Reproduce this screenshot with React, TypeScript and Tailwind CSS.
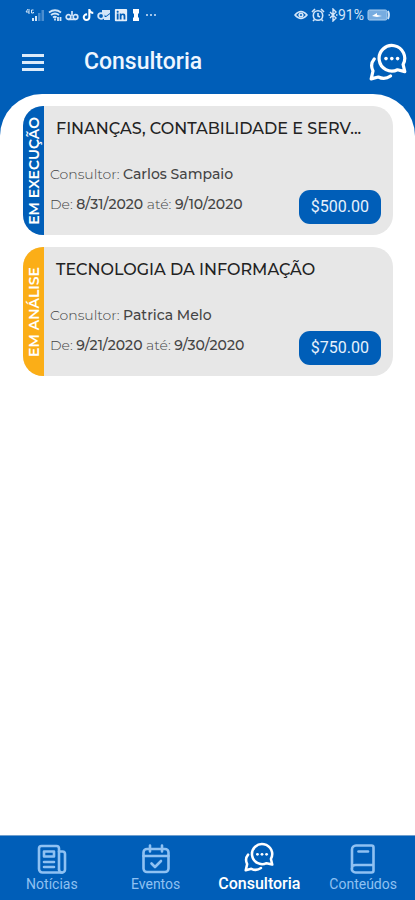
import { FaLinkedin, FaTiktok } from 'react-icons/fa';

const consultorias = [
  {
    status: 'EM EXECUÇÃO',
    color: 'bg-[#005eb8]',
    title: 'FINANÇAS, CONTABILIDADE E SERV...',
    consultor: 'Carlos Sampaio',
    start: '8/31/2020',
    end: '9/10/2020',
    price: '$500.00',
  },
  {
    status: 'EM ANÁLISE',
    color: 'bg-[#fbae17]',
    title: 'TECNOLOGIA DA INFORMAÇÃO',
    consultor: 'Patrica Melo',
    start: '9/21/2020',
    end: '9/30/2020',
    price: '$750.00',
  },
];

function ChatIcon({ className }: { className: string }) {
  return (
    <svg viewBox="0 0 38 38" fill="none" stroke="currentColor" strokeWidth="3.2" strokeLinecap="round" strokeLinejoin="round" className={className}>
      <path d="M34.1 21.500A12.800 12.800 0 1 0 28.500 26.800L35.800 28.600Z" />
      <path d="M5.2 16C2.200 19.600 2 24 4 28L2.200 35.900L9.3 34C13.500 36 18 35.500 21.500 33" />
      <g fill="currentColor" stroke="none">
        <circle cx="17" cy="15.6" r="1.8" />
        <circle cx="22.8" cy="15.6" r="1.8" />
        <circle cx="28.6" cy="15.6" r="1.8" />
      </g>
    </svg>
  );
}

function NewsIcon() {
  return (
    <svg viewBox="0 0 30 30" fill="none" stroke="currentColor" strokeWidth="2.6" strokeLinecap="round" strokeLinejoin="round" className="size-[30px]">
      <path d="M22 25V4.500a2.500 2.500 0 0 0-2.500-2.500H4.500A2.500 2.500 0 0 0 2 4.500V25a3.500 3.500 0 0 0 3.500 3.500H25" />
      <path d="M22 7.500h3.500a2.500 2.500 0 0 1 2.500 2.500V25.500a3 3 0 0 1-6 0" />
      <path d="M7 7.500h10v5H7zM7 18h10M7 23h10" />
    </svg>
  );
}

function EventIcon() {
  return (
    <svg viewBox="0 0 30 30" fill="none" stroke="currentColor" strokeWidth="2.6" strokeLinecap="round" strokeLinejoin="round" className="size-[30px]">
      <rect x="2.500" y="5" width="25" height="23" rx="3.500" />
      <path d="M2.500 12h25M9 1.500v6M21 1.500v6M10.500 19.500l3.500 3.500 6-6" />
    </svg>
  );
}

function BookIcon() {
  return (
    <svg viewBox="0 0 30 30" fill="none" stroke="currentColor" strokeWidth="2.6" strokeLinecap="round" strokeLinejoin="round" className="size-[30px]">
      <path d="M4 25V5.500A4 4 0 0 1 8 1.500h15.500a2 2 0 0 1 2 2V21H7.500a3.500 3.500 0 0 0 0 7.500h16a2 2 0 0 0 2-2V21" />
      <path d="M10.500 7.500h9.500" />
    </svg>
  );
}

function StatusBar() {
  return (
    <div className="flex h-[30px] items-center justify-between pr-6 pl-[25px] text-[#d3e6f9]">
      <div className="flex items-center gap-[3px]">
        <svg viewBox="0 0 20 14" className="h-[14px] w-[20px]" fill="currentColor">
          <path d="M3 1L1 4h3M4 1v5M8.500 2H6.500v3h2V4" fill="none" stroke="currentColor" strokeWidth="1" />
          <path d="M7 10h2v3H7zM10 8h2v5h-2z" />
          <path d="M13 5h2.500v8H13zM16.500 2h2.500v11h-2.500z" opacity="0.35" />
        </svg>
        <svg viewBox="0 0 14 14" className="size-[14px]" fill="none" stroke="currentColor" strokeWidth="1.800">
          <path d="M1 4.500Q7 0 13 4.500M3 7Q7 4 11 7M5 9.500Q7 8 8.500 9.500M7 12.500v-2M10 9v4M12.500 9v4" />
        </svg>
        <svg viewBox="0 0 14 14" className="size-[14px]" fill="none" stroke="currentColor" strokeWidth="1.700">
          <circle cx="3.500" cy="9" r="2.300" />
          <circle cx="10.500" cy="9" r="2.300" />
          <path d="M3.500 11.300h7M7 3v5" />
        </svg>
        <FaTiktok size={12} className="text-white" />
        <svg viewBox="0 0 14 14" className="size-[14px]" fill="currentColor">
          <path d="M5 2h8v3L9 8 5 5zM9 9l4-3v6H7V9z" />
          <circle cx="4" cy="8" r="2.800" fill="#005eb8" stroke="currentColor" strokeWidth="1.800" />
        </svg>
        <FaLinkedin size={14} className="text-[#e4effa]" />
        <svg viewBox="0 0 10 14" className="h-[14px] w-[10px] text-white" fill="currentColor">
          <path d="M2 1h6v4L7 6v3l1 1v3H2v-3l1-1V6L2 5z" />
        </svg>
        <svg viewBox="0 0 14 14" className="size-[14px]" fill="currentColor">
          <circle cx="3" cy="7" r="1" />
          <circle cx="7" cy="7" r="1" />
          <circle cx="11" cy="7" r="1" />
        </svg>
      </div>
      <div className="flex items-center gap-[3px]">
        <svg viewBox="0 0 14 14" className="size-[14px]" fill="none" stroke="currentColor" strokeWidth="1.600">
          <path d="M1 7Q7 0 13 7Q7 14 1 7z" />
          <circle cx="7" cy="7" r="1.800" />
        </svg>
        <svg viewBox="0 0 14 14" className="size-[14px]" fill="none" stroke="currentColor" strokeWidth="1.600">
          <circle cx="7" cy="7.500" r="4.700" />
          <path d="M1 4l3-3M13 4l-3-3M7 5v3l2 1M3.500 11.500L2 13M10.500 11.500L12 13" />
        </svg>
        <div className="flex items-center">
          <svg viewBox="0 0 10 14" className="h-[14px] w-[10px]" fill="none" stroke="currentColor" strokeWidth="1.400">
            <path d="M2 4l6 6-3 3V1l3 3-6 6M0.500 7h1.500M8 7h1.500" />
          </svg>
          <span className="text-sm">91%</span>
        </div>
        <svg viewBox="0 0 24 12" className="h-[12px] w-[24px]">
          <rect x="1" y="1" width="19" height="10" rx="1.500" fill="#77ace0" stroke="#a9cdef" />
          <path d="M5 7l5-3v2l5 1-5 1z" fill="#fff" />
          <path d="M21 2q2 4 0 8" fill="none" stroke="#d3e6f9" strokeWidth="1.800" />
        </svg>
      </div>
    </div>
  );
}

function Card({ item }: { item: (typeof consultorias)[number] }) {
  return (
    <article className="flex overflow-hidden rounded-[20px] bg-[#e7e7e7] font-['Montserrat','Inter',sans-serif] text-[#444]">
      <div className={`flex w-[21px] shrink-0 items-center justify-center ${item.color}`}>
        <span className="rotate-180 text-sm leading-5 font-semibold whitespace-nowrap text-white [writing-mode:vertical-rl]">{item.status}</span>
      </div>
      <div className="min-w-0 flex-1 pt-[11px] pr-3 pb-[21px] pl-[6px]">
        <h2 className="truncate pl-[6px] text-base leading-6 font-medium text-[#222]">{item.title}</h2>
        <div className="mt-[23px] flex items-end justify-between">
          <div className="text-sm leading-5 font-medium">
            <p>
              <span className="font-light">Consultor: </span>
              {item.consultor}
            </p>
            <p className="mt-[10px]">
              <span className="font-light">De: </span>
              {item.start}
              <span className="font-light"> até: </span>
              {item.end}
            </p>
          </div>
          <span className="-mb-[10px] rounded-[11px] bg-[#005eb8] px-3 py-[5px] font-[Roboto,sans-serif] text-base leading-6 text-[#e6f1fc]">{item.price}</span>
        </div>
      </div>
    </article>
  );
}

export default function App() {
  return (
    <div className="flex min-h-screen flex-col bg-[#005eb8] font-[Roboto,sans-serif]">
      <StatusBar />
      <header className="flex h-16 items-center pr-2 pl-[22px]">
        <button aria-label="Menu" className="flex w-[22px] flex-col gap-1 text-[#dcebfa]">
          <span className="h-[3px] w-full bg-current" />
          <span className="h-[3px] w-full bg-current" />
          <span className="h-[3px] w-full bg-current" />
        </button>
        <h1 className="ml-10 flex-1 text-[23px] leading-9 font-medium text-[#eef6ff]">Consultoria</h1>
        <button aria-label="Chat" className="text-white">
          <ChatIcon className="size-[38px]" />
        </button>
      </header>

      <main className="flex flex-1 flex-col gap-3 rounded-t-[42px] bg-white pt-3 pr-[22px] pl-[23px]">
        {consultorias.map((item) => (
          <Card key={item.title} item={item} />
        ))}
      </main>

      <nav className="grid h-[65px] grid-cols-4 border-t border-[#6f9fce] text-[#8fc1f2]">
        <a href="#noticias" className="flex flex-col items-center pt-2 text-sm leading-5">
          <NewsIcon />
          Notícias
        </a>
        <a href="#eventos" className="flex flex-col items-center pt-2 text-sm leading-5">
          <EventIcon />
          Eventos
        </a>
        <a href="#consultoria" className="flex flex-col items-center pt-[6px] text-base leading-6 font-medium text-white">
          <ChatIcon className="size-[30px]" />
          Consultoria
        </a>
        <a href="#conteudos" className="flex flex-col items-center pt-2 text-sm leading-5">
          <BookIcon />
          Conteúdos
        </a>
      </nav>
    </div>
  );
}
